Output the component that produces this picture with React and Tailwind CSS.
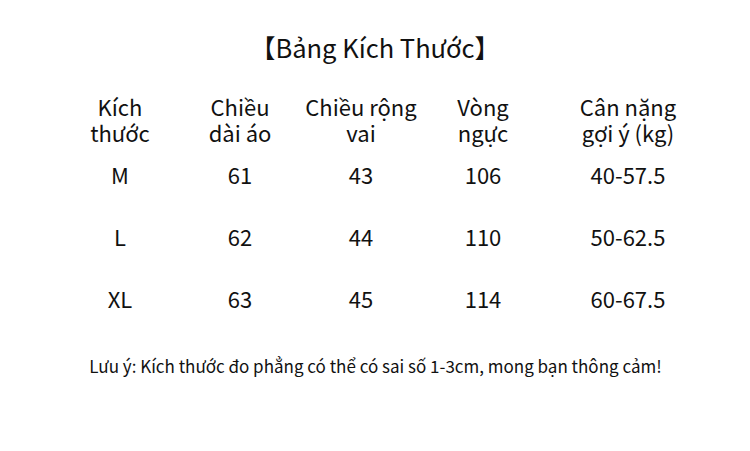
const headers = [
  ["Kích", "thước"],
  ["Chiều", "dài áo"],
  ["Chiều rộng", "vai"],
  ["Vòng", "ngực"],
  ["Cân nặng", "gợi ý (kg)"],
];

const rows = [
  ["M", "61", "43", "106", "40-57.5"],
  ["L", "62", "44", "110", "50-62.5"],
  ["XL", "63", "45", "114", "60-67.5"],
];

export default function App() {
  return (
    <div
      className="w-[750px] h-[451px] bg-white text-[#111] overflow-hidden"
      style={{ fontFamily: '"Noto Sans CJK SC", "Noto Sans", sans-serif' }}
    >
      {/* Title */}
      <h1 className="pt-[29px] h-[84px] text-center text-[25.5px] leading-[36px]">
        【Bảng Kích Thước】
      </h1>

      {/* Table */}
      <div className="ml-[60px] grid grid-cols-[120px_120px_122px_122px_168px]">
        {headers.map((h, i) => (
          <div key={i} className="text-center text-[22px] leading-[26px] h-[75px] pt-[9px]">
            <div>{h[0]}</div>
            <div>{h[1]}</div>
          </div>
        ))}
        {rows.map((r) =>
          r.map((cell, j) => (
            <div key={r[0] + j} className="text-center text-[22px] leading-[26px] h-[62px] pt-[2px]">
              {cell}
            </div>
          ))
        )}
      </div>

      {/* Note */}
      <p className="mt-[8px] text-center text-[17px] leading-[26px] pl-[1px]">
        Lưu ý: Kích thước đo phẳng có thể có sai số 1-3cm, mong bạn thông cảm!
      </p>
    </div>
  );
}
